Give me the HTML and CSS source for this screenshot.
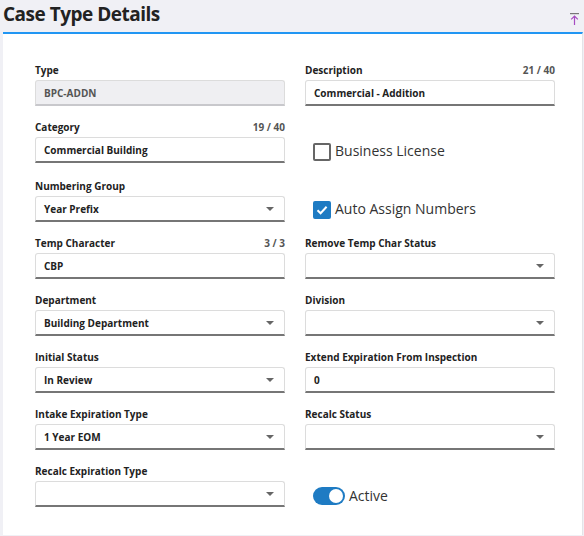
FILE: index.html
```html
<!DOCTYPE html>
<html>
<head>
<meta charset="utf-8">
<link rel="stylesheet" href="styles.css">
</head>
<body>
<div class="header">
  <h1 class="title">Case Type Details</h1>
  <svg class="top-icon" width="9" height="12" viewBox="0 0 9 12">
    <rect x="0" y="0" width="9" height="1.2" fill="#777"/>
    <path d="M4.5 3 V12 M1.2 6.3 L4.5 3 L7.8 6.3" stroke="#a64bc2" stroke-width="1.2" fill="none"/>
  </svg>
</div>
<div class="card">
  <div class="form">
    <div class="field">
      <div class="label-row"><span class="label">Type</span></div>
      <div class="input disabled">BPC-ADDN</div>
    </div>
    <div class="field">
      <div class="label-row"><span class="label">Description</span><span class="count">21 / 40</span></div>
      <div class="input">Commercial - Addition</div>
    </div>

    <div class="field tall">
      <div class="label-row"><span class="label">Category</span><span class="count">19 / 40</span></div>
      <div class="input">Commercial Building</div>
    </div>
    <div class="check-cell">
      <span class="checkbox"></span><span class="check-text">Business License</span>
    </div>

    <div class="field">
      <div class="label-row"><span class="label">Numbering Group</span></div>
      <div class="input select">Year Prefix<span class="arrow"></span></div>
    </div>
    <div class="check-cell">
      <span class="checkbox checked"><svg width="14" height="14" viewBox="0 0 14 14"><path d="M2.5 7.2 L5.6 10.2 L11.6 3.8" stroke="#fff" stroke-width="2" fill="none"/></svg></span><span class="check-text">Auto Assign Numbers</span>
    </div>

    <div class="field">
      <div class="label-row"><span class="label">Temp Character</span><span class="count">3 / 3</span></div>
      <div class="input">CBP</div>
    </div>
    <div class="field">
      <div class="label-row"><span class="label">Remove Temp Char Status</span></div>
      <div class="input select"><span class="arrow"></span></div>
    </div>

    <div class="field">
      <div class="label-row"><span class="label">Department</span></div>
      <div class="input select">Building Department<span class="arrow"></span></div>
    </div>
    <div class="field">
      <div class="label-row"><span class="label">Division</span></div>
      <div class="input select"><span class="arrow"></span></div>
    </div>

    <div class="field">
      <div class="label-row"><span class="label">Initial Status</span></div>
      <div class="input select">In Review<span class="arrow"></span></div>
    </div>
    <div class="field">
      <div class="label-row"><span class="label">Extend Expiration From Inspection</span></div>
      <div class="input">0</div>
    </div>

    <div class="field">
      <div class="label-row"><span class="label">Intake Expiration Type</span></div>
      <div class="input select">1 Year EOM<span class="arrow"></span></div>
    </div>
    <div class="field">
      <div class="label-row"><span class="label">Recalc Status</span></div>
      <div class="input select"><span class="arrow"></span></div>
    </div>

    <div class="field">
      <div class="label-row"><span class="label">Recalc Expiration Type</span></div>
      <div class="input select"><span class="arrow"></span></div>
    </div>
    <div class="check-cell toggle-cell">
      <span class="toggle"><span class="knob"></span></span><span class="toggle-text">Active</span>
    </div>
  </div>
</div>
</body>
</html>
```

FILE: styles.css
```css
html, body {
  margin: 0;
  padding: 0;
}
body {
  background: #f0f0f5;
  font-family: "Open Sans", "Noto Sans", sans-serif;
  color: #222;
  width: 584px;
  height: 536px;
  overflow: hidden;
}
.header {
  position: relative;
  height: 32px;
  padding-left: 3px;
}
.title {
  margin: 0;
  font-size: 19px;
  font-weight: 700;
  line-height: 29px;
  color: #222;
  letter-spacing: -0.5px;
}
.top-icon {
  position: absolute;
  right: 5px;
  top: 13px;
}
.card {
  margin-left: 3px;
  width: 580px;
  height: 503px;
  background: #fff;
  border-top: 2px solid #2196f3;
  border-right: 1px solid #e4e4e8;
  box-sizing: border-box;
}
.form {
  display: grid;
  grid-template-columns: 250px 250px;
  column-gap: 20px;
  row-gap: 14px;
  padding: 29px 0 0 32px;
}
.field {
  display: flex;
  flex-direction: column;
}
.field.tall {
  margin-bottom: 2px;
}
.label-row {
  display: flex;
  justify-content: space-between;
  height: 14px;
  line-height: 14px;
  margin-bottom: 3px;
}
.label {
  font-size: 10px;
  font-weight: 700;
  color: #222;
}
.count {
  font-size: 10px;
  font-weight: 700;
  color: #555;
}
.input {
  position: relative;
  height: 26px;
  box-sizing: border-box;
  border: 1px solid #dcdcdc;
  border-bottom: 2px solid #767676;
  border-radius: 3px 3px 0 0;
  padding-left: 8px;
  font-size: 10px;
  font-weight: 700;
  line-height: 25px;
  color: #222;
  background: #fff;
}
.input.disabled {
  background: #efeff2;
  color: #555;
  border-bottom-color: #c8c8cc;
}
.arrow {
  position: absolute;
  right: 10px;
  top: 10px;
  width: 0;
  height: 0;
  border-left: 4px solid transparent;
  border-right: 4px solid transparent;
  border-top: 4px solid #666;
}
.check-cell {
  display: flex;
  align-items: center;
  padding-top: 17px;
  padding-left: 8px;
}
.checkbox {
  width: 18px;
  height: 18px;
  box-sizing: border-box;
  border: 2px solid #666;
  border-radius: 2px;
  display: flex;
  align-items: center;
  justify-content: center;
  margin-top: 2px;
}
.checkbox.checked {
  background: #1e7bc3;
  border-color: #1e7bc3;
}
.check-text {
  margin-left: 4px;
  font-size: 14px;
  color: #333;
  line-height: 20px;
}
.toggle-cell {
  padding-top: 21px;
}
.toggle {
  position: relative;
  width: 32px;
  height: 18px;
  border-radius: 9px;
  background: #1e7bc3;
}
.knob {
  position: absolute;
  right: 2px;
  top: 2px;
  width: 14px;
  height: 14px;
  border-radius: 50%;
  background: #fff;
}
.toggle-text {
  margin-left: 4px;
  font-size: 14px;
  color: #333;
  line-height: 20px;
}
```
